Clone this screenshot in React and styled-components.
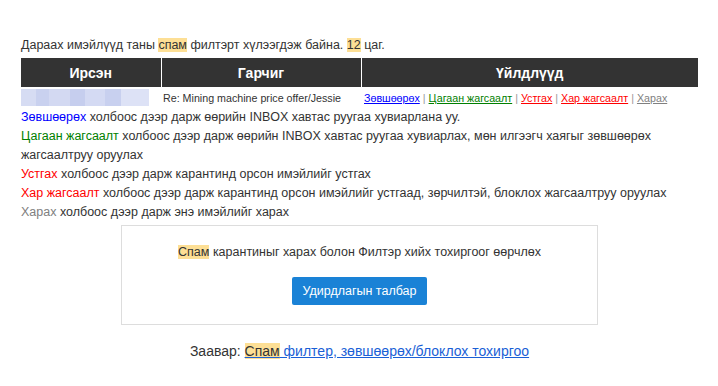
import React from 'react';
import styled, { createGlobalStyle } from 'styled-components';

const FONT = '"Liberation Sans", Arial, sans-serif';

const GlobalStyle = createGlobalStyle`
  html, body {
    margin: 0;
    padding: 0;
    background: #fff;
  }
  body {
    font-family: ${FONT};
    color: #333;
  }
`;

const Page = styled.div`
  width: 718px;
  height: 386px;
  box-sizing: border-box;
  padding: 36px 20px 0 21px;
  overflow: hidden;
`;

const Intro = styled.div`
  font-size: 12.5px;
  line-height: 19px;
  margin-bottom: 3px;
`;

const Mark = styled.span`
  background: #fddf95;
  color: #333;
`;

const Table = styled.table`
  width: 677px;
  border-collapse: collapse;
  table-layout: fixed;
`;

const Th = styled.th`
  background: #333;
  color: #fff;
  font-size: 14px;
  font-weight: bold;
  height: 29px;
  padding: 0;
  text-align: center;
  border-left: ${p => (p.$first ? 'none' : '1px solid #fff')};
`;

const Td = styled.td`
  font-size: 10.7px;
  height: 21px;
  padding: 0 0 0 ${p => p.$pad || 0}px;
  vertical-align: middle;
  white-space: nowrap;
`;

const Blur = styled.div`
  width: 128px;
  height: 17px;
  background:
    linear-gradient(90deg, #d6dcf3 0 12%, #c9d1ef 12% 22%, #d3d9f2 22% 38%, #c6ceee 38% 50%, #d4daf3 50% 66%, #c8d0ef 66% 78%, #dde2f6 78% 100%);
`;

const Action = styled.a`
  color: ${p => p.$color};
  text-decoration: underline;
  cursor: pointer;
`;

const Sep = styled.span`
  color: #999;
  margin: 0 3px;
`;

const Notes = styled.div`
  font-size: 12.5px;
  line-height: 19px;
`;

const Word = styled.span`
  color: ${p => p.$color};
`;

const Panel = styled.div`
  width: 477px;
  margin: 3px 0 0 100px;
  box-sizing: border-box;
  border: 1px solid #ddd;
  padding: 17px 0 19px;
  display: flex;
  flex-direction: column;
  align-items: center;
  gap: 15px;
  font-size: 12.5px;
  line-height: 19px;
`;

const Button = styled.button`
  background: #1a82d6;
  color: #fff;
  border: none;
  border-radius: 2px;
  font-family: ${FONT};
  font-size: 12.5px;
  width: 135px;
  height: 28px;
  padding: 0;
  cursor: pointer;
`;

const Footer = styled.div`
  text-align: center;
  font-size: 14px;
  line-height: 19px;
  margin-top: 17px;
`;

const Guide = styled.a`
  color: #1a5fd6;
  text-decoration: underline;
`;

const actions = [
  { label: 'Зөвшөөрөх', color: '#0000ff' },
  { label: 'Цагаан жагсаалт', color: '#008000' },
  { label: 'Устгах', color: '#ff0000' },
  { label: 'Хар жагсаалт', color: '#ff0000' },
  { label: 'Харах', color: '#808080' },
];

const notes = [
  { word: 'Зөвшөөрөх', color: '#0000ff', text: ' холбоос дээр дарж өөрийн INBOX хавтас руугаа хувиарлана уу.' },
  { word: 'Цагаан жагсаалт', color: '#008000', text: ' холбоос дээр дарж өөрийн INBOX хавтас руугаа хувиарлах, мөн илгээгч хаягыг зөвшөөрөх жагсаалтруу оруулах' },
  { word: 'Устгах', color: '#ff0000', text: ' холбоос дээр дарж карантинд орсон имэйлийг устгах' },
  { word: 'Хар жагсаалт', color: '#ff0000', text: ' холбоос дээр дарж карантинд орсон имэйлийг устгаад, зөрчилтэй, блоклох жагсаалтруу оруулах' },
  { word: 'Харах', color: '#808080', text: ' холбоос дээр дарж энэ имэйлийг харах' },
];

export default function App() {
  return (
    <Page>
      <GlobalStyle />
      <Intro>
        Дараах имэйлүүд таны <Mark>спам</Mark> филтэрт хүлээгдэж байна. <Mark>12</Mark> цаг.
      </Intro>
      <Table>
        <colgroup>
          <col style={{ width: 140 }} />
          <col style={{ width: 200 }} />
          <col />
        </colgroup>
        <thead>
          <tr>
            <Th $first>Ирсэн</Th>
            <Th>Гарчиг</Th>
            <Th>Үйлдлүүд</Th>
          </tr>
        </thead>
        <tbody>
          <tr>
            <Td><Blur /></Td>
            <Td $pad={2}>Re: Mining machine price offer/Jessie</Td>
            <Td $pad={3}>
              {actions.map((a, i) => (
                <React.Fragment key={a.label}>
                  {i > 0 && <Sep>|</Sep>}
                  <Action $color={a.color}>{a.label}</Action>
                </React.Fragment>
              ))}
            </Td>
          </tr>
        </tbody>
      </Table>
      <Notes>
        {notes.map(n => (
          <div key={n.word}>
            <Word $color={n.color}>{n.word}</Word>{n.text}
          </div>
        ))}
      </Notes>
      <Panel>
        <div><Mark>Спам</Mark> карантиныг харах болон Филтэр хийх тохиргоог өөрчлөх</div>
        <Button>Удирдлагын талбар</Button>
      </Panel>
      <Footer>
        Заавар: <Guide><Mark>Спам</Mark> филтер, зөвшөөрөх/блоклох тохиргоо</Guide>
      </Footer>
    </Page>
  );
}
